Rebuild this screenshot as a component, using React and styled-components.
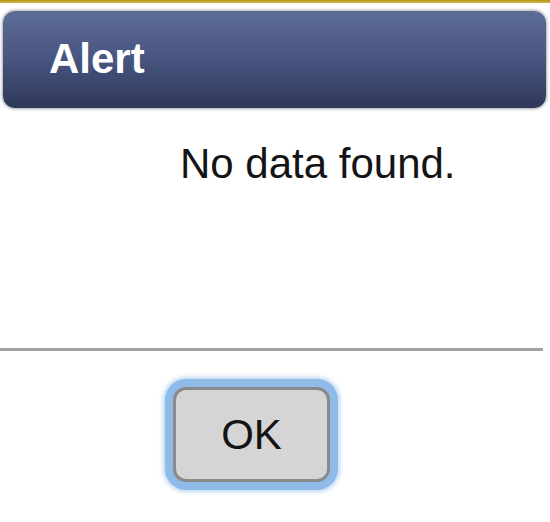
import React from "react";
import styled, { createGlobalStyle } from "styled-components";

const Global = createGlobalStyle`
  html, body {
    margin: 0;
    padding: 0;
    background: #ffffff;
  }
  body {
    font-family: "Liberation Sans", Arial, sans-serif;
  }
`;

const Page = styled.div`
  width: 550px;
  height: 522px;
  display: flex;
  flex-direction: column;
  overflow: hidden;
`;

const GoldLine = styled.div`
  height: 3px;
  background: linear-gradient(to bottom, #b4940f, #d2b94f);
`;

// шапка окна с градиентом
const Header = styled.div`
  margin: 8px 4px 0 3px;
  height: 97px;
  box-sizing: border-box;
  border-radius: 12px;
  background: linear-gradient(to bottom, #5e6c98 0%, #4a5783 45%, #2e3858 100%);
  box-shadow: 0 0 3px 1px rgba(0, 0, 0, 0.35);
  display: flex;
  align-items: center;
  padding: 0 0 2px 46px;
  color: #ffffff;
  font-weight: bold;
  font-size: 42px;
`;

const Message = styled.p`
  margin: 0;
  padding: 32px 0 0 180px;
  font-size: 42px;
  line-height: 48px;
  color: #141414;
  height: 210px;
  box-sizing: border-box;
`;

const Divider = styled.hr`
  margin: 30px 7px 0 0;
  border: none;
  height: 3px;
  background: #a2a2a2;
`;

const Footer = styled.div`
  display: flex;
  padding: 36px 0 0 173px;
`;

const Button = styled.button`
  width: 157px;
  height: 95px;
  border: 3px solid #8a8a8a;
  border-radius: 13px;
  background: #d5d5d5;
  font-family: "Liberation Sans", Arial, sans-serif;
  font-size: 42px;
  color: #141414;
  padding: 0;
  box-shadow: 0 0 0 8px #8fbbe8, 0 0 4px 10px rgba(143, 187, 232, 0.6);
  outline: none;
`;

export default function App() {
  return (
    <>
      <Global />
      <Page>
        <GoldLine />
        <Header>Alert</Header>
        <Message>No data found.</Message>
        <Divider />
        <Footer>
          <Button>OK</Button>
        </Footer>
      </Page>
    </>
  );
}
